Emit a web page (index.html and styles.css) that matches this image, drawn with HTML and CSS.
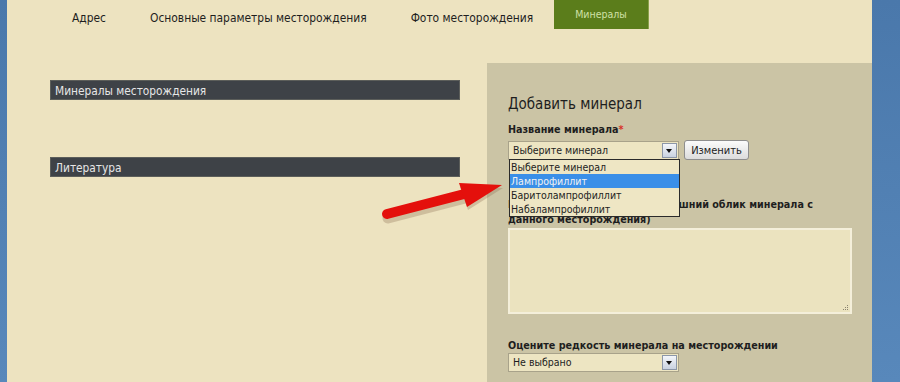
FILE: index.html
```html
<!DOCTYPE html>
<html lang="ru">

  <head>
    <meta charset="UTF-8">
    <title>Минералы</title>
    <link rel="stylesheet" href="styles.css">
  </head>

  <body>
    <div class="page">
      <div class="tabs">
        <span class="tab">Адрес</span>
        <span class="tab">Основные параметры месторождения</span>
        <span class="tab">Фото месторождения</span>
        <span class="tab active">Минералы</span>
      </div>

      <div class="content">
        <div class="left">
          <div class="bar">Минералы месторождения</div>
          <div class="bar second">Литература</div>
        </div>

        <div class="panel">
          <h2>Добавить минерал</h2>
          <label class="field-label">Название минерала<span class="star">*</span></label>
          <div class="row">
            <div class="select">
              <span>Выберите минерал</span>
              <i class="arrow-btn"></i>
              <ul class="options">
                <li>Выберите минерал</li>
                <li class="selected">Лампрофиллит</li>
                <li>Баритолампрофиллит</li>
                <li>Набалампрофиллит</li>
              </ul>
            </div>
            <button>Изменить</button>
          </div>

          <label class="field-label desc">Комментарий к находкам (внешний облик минерала с<br>данного месторождения)</label>
          <div class="textarea">
            <svg class="grip" width="7" height="7" viewBox="0 0 7 7">
              <rect x="5" y="1" width="1" height="1"/>
              <rect x="3" y="3" width="1" height="1"/>
              <rect x="5" y="3" width="1" height="1"/>
              <rect x="1" y="5" width="1" height="1"/>
              <rect x="3" y="5" width="1" height="1"/>
              <rect x="5" y="5" width="1" height="1"/>
            </svg>
          </div>

          <label class="field-label rarity">Оцените редкость минерала на месторождении</label>
          <div class="select">
            <span>Не выбрано</span>
            <i class="arrow-btn"></i>
          </div>
        </div>
      </div>
    </div>

    <svg class="pointer" width="900" height="382" viewBox="0 0 900 382">
      <line x1="387" y1="215" x2="472" y2="193" stroke="#8a6a50" stroke-width="11" stroke-linecap="round" opacity="0.3" transform="translate(1 3)"/>
      <polygon points="460,187 503,188 468,210" fill="#8a6a50" opacity="0.3"/>
      <line x1="387" y1="214" x2="472" y2="192" stroke="#e4100c" stroke-width="10" stroke-linecap="round"/>
      <polygon points="459,183 502,185 467,207" fill="#e4100c"/>
    </svg>
  </body>

</html>
```

FILE: styles.css
```css
body {
  margin: 0;
  height: 382px;
  overflow: hidden;
  background: linear-gradient(to bottom, #4a78ab, #5888bb);
  font-family: "DejaVu Sans Condensed", "DejaVu Sans", Verdana, sans-serif;
  font-stretch: condensed;
  color: #1e1e1e;
}

.page {
  margin-left: 7px;
  width: 865px;
  height: 382px;
  background-color: #ede3c0;
  display: flex;
  flex-direction: column;
}

.tabs {
  display: flex;
  height: 29px;
  padding-left: 43px;
  font-size: 11.9px;
}

.tab {
  padding: 0 22px;
  line-height: 37px;
}

.tab.active {
  margin-left: -1px;
  line-height: 29px;
  background-color: #5b7d1b;
  color: #cfe0a6;
  font-size: 10.5px;
  padding: 0 21px;
  border-right: 1px solid #8aa04a;
}

.content {
  flex: 1;
  display: flex;
}

.left {
  width: 410px;
  margin-left: 43px;
  padding-top: 51px;
}

.bar {
  height: 20px;
  line-height: 20px;
  padding-left: 4px;
  background-color: #3e4247;
  border: 1px solid #5c5e5a;
  box-sizing: border-box;
  color: #e6e6e6;
  font-size: 11.8px;
}

.bar.second {
  margin-top: 57px;
}

.panel {
  position: relative;
  margin-top: 34px;
  margin-left: 27px;
  width: 385px;
  padding: 31px 20px 0 21px;
  box-sizing: border-box;
  background-color: #cbc4a5;
}

h2 {
  margin: 0;
  font-size: 15px;
  font-weight: normal;
  line-height: 20px;
}

.field-label {
  display: block;
  margin-top: 9px;
  font-size: 10.7px;
  font-weight: bold;
  line-height: 14px;
}

.star {
  color: #d8332a;
}

.row {
  display: flex;
  align-items: flex-start;
  margin-top: 4px;
}

.select {
  position: relative;
  width: 171px;
  height: 19px;
  box-sizing: border-box;
  border: 1px solid #a8a28a;
  background-color: #ede5c2;
  font-size: 10.5px;
  line-height: 17px;
  padding-left: 4px;
}

.arrow-btn {
  position: absolute;
  right: 1px;
  top: 1px;
  width: 13px;
  height: 13px;
  border: 1px solid #8c97a8;
  background: linear-gradient(#f4f6fa, #c9d2e0);
}

.arrow-btn::after {
  content: "";
  position: absolute;
  left: 3px;
  top: 5px;
  border-left: 3.5px solid transparent;
  border-right: 3.5px solid transparent;
  border-top: 4px solid #111;
}

.options {
  position: absolute;
  left: 0;
  top: 17px;
  width: 171px;
  box-sizing: border-box;
  margin: 0;
  padding: 0;
  list-style: none;
  border: 1px solid #2a2a2a;
  background-color: #eee6c4;
  z-index: 2;
}

.options li {
  height: 14px;
  line-height: 14px;
  padding-left: 1px;
  font-size: 10.5px;
}

.options .selected {
  background-color: #3a8fe8;
  color: #f2f2f2;
}

button {
  margin-left: 5px;
  margin-top: -1px;
  width: 65px;
  height: 20px;
  padding: 0;
  font-family: inherit;
  font-stretch: condensed;
  font-size: 11px;
  color: #222;
  border: 1px solid #8e8e8e;
  border-radius: 3px;
  background: linear-gradient(#fbfbfb, #dcdcdc);
}

.field-label.desc {
  margin-top: 37px;
  line-height: 15px;
}

.textarea {
  position: relative;
  margin-top: 1px;
  height: 86px;
  box-sizing: border-box;
  border: 2px solid #f4efda;
  background-color: #ebe3bf;
}

.grip {
  position: absolute;
  right: 1px;
  bottom: 1px;
  fill: #8a8470;
}

.field-label.rarity {
  margin-top: 24px;
  line-height: 15px;
}

.pointer {
  position: absolute;
  left: 0;
  top: 0;
  pointer-events: none;
}
```
